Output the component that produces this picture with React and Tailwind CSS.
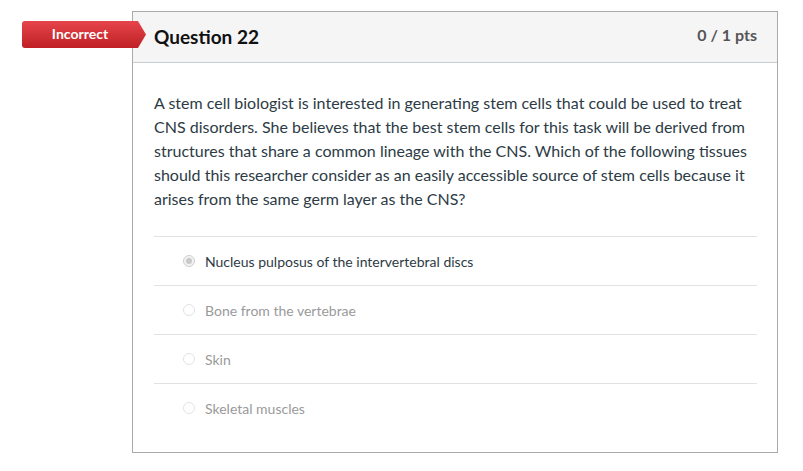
import React from "react";

const answers = [
  { text: "Nucleus pulposus of the intervertebral discs", selected: true },
  { text: "Bone from the vertebrae" },
  { text: "Skin" },
  { text: "Skeletal muscles" },
];

export default function App() {
  return (
    <div
      className="relative w-[803px] h-[471px] bg-white"
      style={{ fontFamily: "Lato, 'Liberation Sans', sans-serif" }}
    >
      <div className="pt-[11px] pl-[132px]">
        <div className="w-[646px] h-[442px] border border-[#aaaaaa] bg-white">
          <div className="h-[51px] bg-[#f5f5f5] border-b border-[#c7cdd1] flex items-center justify-between pl-[21px] pr-[20px]">
            <div className="text-[19px] font-bold text-[#111] mt-[1px]">Question 22</div>
            <div className="text-[16px] font-bold text-[#555] -mt-[5px]">0 / 1 pts</div>
          </div>
          <div className="pl-[21px] pr-[20px] pt-[28px]">
            <p className="text-[16px] leading-[24px] text-[#2d3b45]">
              A stem cell biologist is interested in generating stem cells that could be used to treat CNS disorders. She believes that the best stem cells for this task will be derived from structures that share a common lineage with the CNS. Which of the following tissues should this researcher consider as an easily accessible source of stem cells because it arises from the same germ layer as the CNS?
            </p>
            <div className="mt-[25px]">
              {answers.map((a, i) => (
                <div
                  key={i}
                  className="h-[49px] border-t border-[#dfe3e6] flex items-center pl-[29px]"
                >
                  <div
                    className={
                      a.selected
                        ? "w-[12px] h-[12px] rounded-full border border-[#cfcfcf] bg-[#f2f2f2] flex items-center justify-center"
                        : "w-[12px] h-[12px] rounded-full border border-[#e3e3e3] bg-white"
                    }
                  >
                    {a.selected && <div className="w-[6px] h-[6px] rounded-full bg-[#c8c8c8]" />}
                  </div>
                  <span
                    className={
                      "ml-[10px] text-[14px] " +
                      (a.selected ? "text-[#2d3b45]" : "text-[#9a9a9a]")
                    }
                  >
                    {a.text}
                  </span>
                </div>
              ))}
            </div>
          </div>
        </div>
      </div>
      <div className="absolute left-[22px] top-[21px] w-[124px] h-[27px] rounded-l-[3px] bg-gradient-to-b from-[#e5444a] to-[#bf1f25] [clip-path:polygon(0_0,116px_0,124px_50%,116px_100%,0_100%)] flex items-center">
        <span className="w-[116px] text-center text-white font-bold text-[14px] -mt-[3px]">Incorrect</span>
      </div>
    </div>
  );
}
